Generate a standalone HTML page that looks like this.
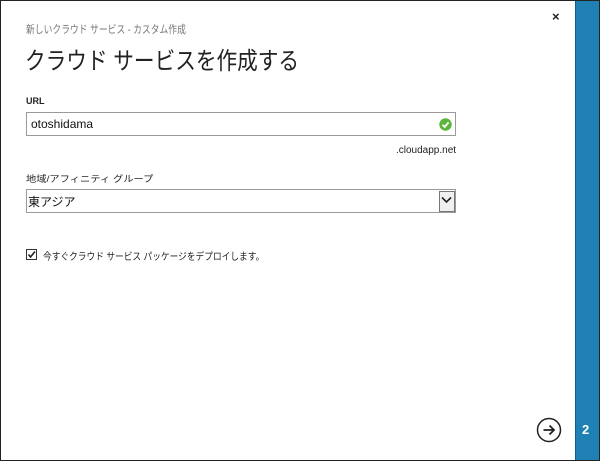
<!DOCTYPE html>
<html><head><meta charset="utf-8"><style>
body{margin:0;width:600px;height:461px;overflow:hidden;font-family:"Liberation Sans","Noto Sans CJK JP",sans-serif;background:#fff;position:relative}
.frame{position:absolute;left:0;top:0;width:598px;height:459px;border:1px solid #222;}
.side{position:absolute;left:575px;top:1px;width:23px;height:459px;background:#1f80b3;border-left:1px solid #0d5f8a}
.t{position:absolute;white-space:nowrap;transform-origin:0 0}
.box{position:absolute;left:26px;width:428px;height:22px;border:1px solid #9a9a9a;background:#fff}
</style></head><body>
<div class="frame"></div>
<div class="side"></div>
<div class="t" style="left:26px;top:21px;font-size:11px;color:#777;transform:scaleX(0.8)">新しいクラウド サービス - カスタム作成</div>
<div class="t" style="left:25px;top:41px;font-size:24px;color:#222;transform:scaleX(0.86)">クラウド サービスを作成する</div>
<div class="t" style="left:552px;top:9px;font-size:13px;font-weight:bold;color:#222">×</div>
<div class="t" style="left:26px;top:96px;font-size:9px;font-weight:bold;color:#222">URL</div>
<div class="box" style="top:112px"></div>
<div class="t" style="left:31px;top:117px;font-size:12px;color:#111">otoshidama</div>
<svg style="position:absolute;left:439px;top:118px" width="13" height="13" viewBox="0 0 13 13"><circle cx="6.5" cy="6.5" r="6.2" fill="#5bb53a"/><path d="M3.5 6.8 L5.7 9 L9.6 4.3" stroke="#fff" stroke-width="1.8" fill="none"/></svg>
<div class="t" style="left:396px;top:145px;font-size:10px;color:#222">.cloudapp.net</div>
<div class="t" style="left:26px;top:172px;font-size:9px;color:#222;transform:scaleX(1.14)">地域/アフィニティ グループ</div>
<div class="box" style="top:189px"></div>
<div class="t" style="left:28px;top:193px;font-size:12px;color:#111">東アジア</div>
<div style="position:absolute;left:439px;top:191px;width:14px;height:19px;border:1px solid #777;background:#f0f0f0"></div>
<svg style="position:absolute;left:441px;top:196px" width="11" height="8"><path d="M1 1.5 L5.5 6 L10 1.5" stroke="#222" stroke-width="1.6" fill="none"/></svg>
<div style="position:absolute;left:26px;top:249px;width:9px;height:9px;border:1px solid #333;background:#fff"></div>
<svg style="position:absolute;left:26px;top:249px" width="11" height="11"><path d="M2.5 5.5 L4.5 8 L9 2.5" stroke="#222" stroke-width="1.6" fill="none"/></svg>
<div class="t" style="left:43px;top:248px;font-size:10px;color:#222;transform:scaleX(0.87)">今すぐクラウド サービス パッケージをデプロイします。</div>
<svg style="position:absolute;left:536px;top:417px" width="26" height="26" viewBox="0 0 26 26"><circle cx="13" cy="13" r="11.5" stroke="#222" stroke-width="1.5" fill="#fff"/><path d="M7.5 13 H18 M13.5 8.5 L18 13 L13.5 17.5" stroke="#222" stroke-width="1.8" fill="none"/></svg>
<div class="t" style="left:582px;top:422px;font-size:13px;font-weight:bold;color:#fff">2</div>
</body></html>
